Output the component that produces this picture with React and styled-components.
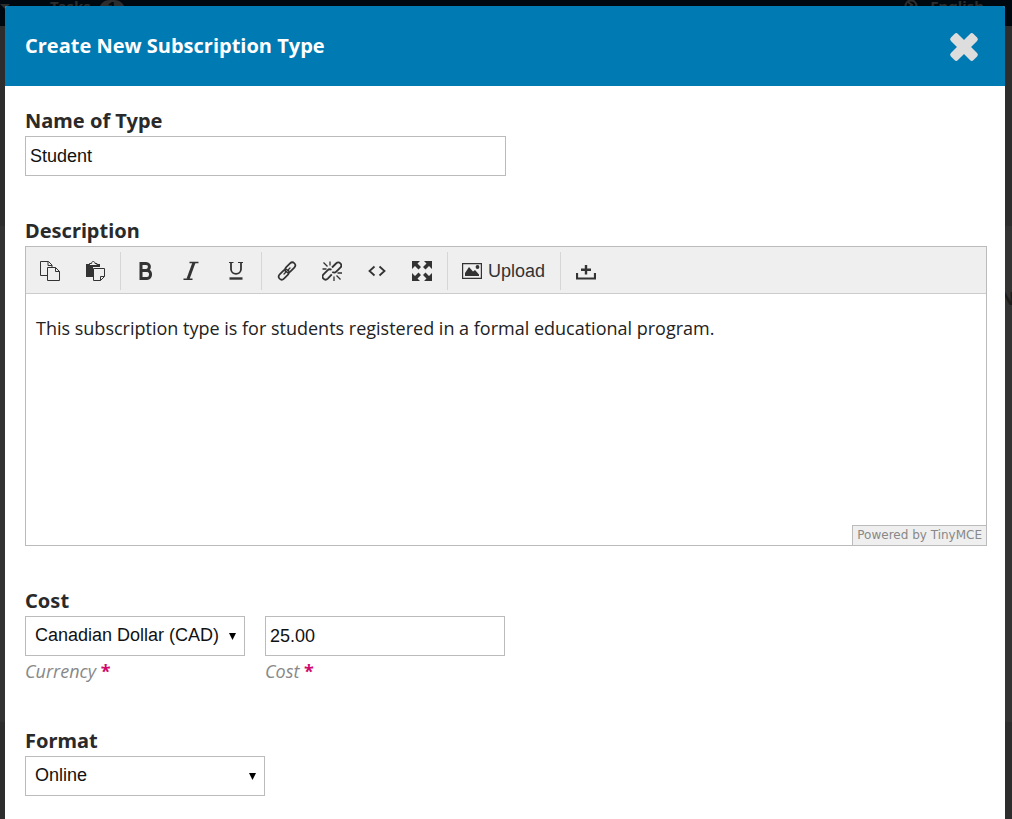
import React from "react";
import styled, { createGlobalStyle } from "styled-components";

const GlobalStyle = createGlobalStyle`
  *, *::before, *::after { box-sizing: border-box; }
  body {
    margin: 0;
    background: #2d2d2d;
    font-family: "Noto Sans", "Open Sans", sans-serif;
    font-size: 18px;
    line-height: 30px;
    color: #2a2a2a;
  }
  #root { position: relative; }
`;

const Backdrop = styled.div`
  position: absolute;
  inset: 0;
  height: 100vh;
  overflow: hidden;
  display: flex;
  flex-direction: column;
  background: #2d2d2d;
`;

const TopBar = styled.header`
  display: flex;
  align-items: flex-start;
  height: 26px;
  padding: 0 28px 0 0;
  background: #00080f;
  color: #2d2d2d;
  font-size: 15px;
  font-weight: 700;
  line-height: 12px;
`;

const Caret = styled.span`
  margin: 4px 40px 0 0;
  border: 5px solid transparent;
  border-top-color: #2d2d2d;
  border-bottom-width: 0;
`;

const TaskCount = styled.span`
  width: 26px;
  height: 20px;
  margin-left: 8px;
  border-radius: 10px;
  background: #2d2d2d;
  color: #00080f;
  text-align: center;
`;

const Language = styled.span`
  display: flex;
  gap: 12px;
  margin-left: auto;
`;

const BackdropPanel = styled.div`
  height: 496px;
  margin-top: 200px;
  padding: 57px 0 0 calc(100% - 12px);
  background: #333333;
  color: #1d1d1d;
  font-weight: 700;
  white-space: nowrap;
`;

const Modal = styled.section`
  position: relative;
  min-height: calc(100vh - 6px);
  margin: 0 7px 0 5px;
  border-radius: 2px 2px 0 0;
  background: #ffffff;
`;

const Page = styled.div`
  padding-top: 6px;
`;

const ModalHeader = styled.header`
  display: flex;
  align-items: center;
  justify-content: space-between;
  height: 80px;
  padding: 0 26px 0 20px;
  border-radius: 2px 2px 0 0;
  background: #007ab2;
`;

const Title = styled.h1`
  margin: 0;
  color: #ffffff;
  font-family: "Open Sans", sans-serif;
  font-size: 20px;
  font-weight: 700;
  line-height: 30px;
`;

const CloseButton = styled.button`
  display: flex;
  padding: 2px 0 0;
  border: 0;
  background: none;
  color: #dddddd;
  cursor: pointer;
`;

const Form = styled.form`
  display: flex;
  flex-direction: column;
  gap: 40px;
  padding: 20px 18px 23px 20px;
`;

const Field = styled.div`
  display: flex;
  flex-direction: column;
  align-items: flex-start;
`;

const Label = styled.label`
  font-size: 20px;
  font-weight: 700;
  line-height: 30px;
`;

const Input = styled.input`
  width: ${(p) => p.$width};
  height: 40px;
  padding: 0 4px;
  border: 1px solid #bbbbbb;
  border-radius: 0;
  background: #ffffff;
  color: #111111;
  font: 18px/38px "Liberation Sans", Arial, sans-serif;
`;

const SelectWrap = styled.span`
  display: grid;
  grid-template-columns: 1fr 16px;
  align-items: center;
  width: ${(p) => p.$width};
  height: 40px;

  svg {
    grid-area: 1 / 2;
    pointer-events: none;
  }
`;

const Select = styled.select`
  grid-area: 1 / 1 / 2 / 3;
  width: 100%;
  height: 40px;
  padding: 0 20px 2px 9px;
  appearance: none;
  border: 1px solid #bbbbbb;
  border-radius: 0;
  background: #ffffff;
  color: #111111;
  font: 18px "Liberation Sans", Arial, sans-serif;
`;

const Row = styled.div`
  display: flex;
  gap: 20px;
`;

const Hint = styled.label`
  color: #888888;
  font-family: "Open Sans", sans-serif;
  font-size: 18px;
  font-style: italic;
  line-height: 30px;
`;

const Required = styled.span`
  color: #d00a6c;
  font-style: normal;
  font-weight: 700;
`;

const Editor = styled.div`
  display: flex;
  flex-direction: column;
  width: 100%;
  height: 300px;
  border: 1px solid #bbbbbb;
`;

const Toolbar = styled.div`
  display: flex;
  align-items: center;
  height: 47px;
  padding-top: 2px;
  border-bottom: 1px solid #cccccc;
  background: #efefef;
`;

const ToolGroup = styled.div`
  display: flex;
  align-items: center;
  height: 38px;
  padding: 0 3px 0 2px;

  &:first-child { padding-left: 1px; }
  & + & { border-left: 1px solid #d6d6d6; }
`;

const ToolButton = styled.button`
  display: flex;
  align-items: center;
  justify-content: center;
  gap: 6px;
  min-width: 45px;
  height: 36px;
  padding: 0 12px;
  border: 0;
  background: none;
  color: #333333;
  font: 18px "Liberation Sans", Arial, sans-serif;
`;

const EditorText = styled.textarea`
  flex: 1;
  width: 100%;
  padding: 19px 10px 0;
  border: 0;
  resize: none;
  outline: 0;
  background: #ffffff;
  color: #222222;
  font: 18px/30px "Open Sans", sans-serif;
`;

const EditorFooter = styled.div`
  display: flex;
  justify-content: flex-end;
`;

const Powered = styled.a`
  height: 20px;
  padding: 0 4px;
  border: solid #bbbbbb;
  border-width: 1px 0 0 1px;
  background: #efefef;
  color: #888888;
  font: 12px/18px "DejaVu Sans", sans-serif;
  text-decoration: none;
`;

const Glyph = ({ children, size = 20 }) => (
  <svg width={size} height={size} viewBox={`0 0 ${size} ${size}`} fill="none" stroke="currentColor" aria-hidden="true">
    {children}
  </svg>
);

const CopyIcon = () => (
  <Glyph>
    <path d="M7.500 14.500H.5V.5h8l3.500 3.500v2.500M8 .5v4h4M7.500 6.500h8l4 4v9h-12zM15.500 6.500v4h4" />
  </Glyph>
);

const PasteIcon = () => (
  <Glyph>
    <path d="M1 3h14v3H8v10H1z" fill="currentColor" stroke="none" />
    <path d="M4.500 4.500v-2h2c0-2.700 3.500-2.700 3.500 0h2v2z" fill="#efefef" />
    <path d="M8.500 7.500h11v8l-4 4h-7zM15.500 19.500v-4h4" fill="#efefef" />
  </Glyph>
);

const BoldIcon = () => (
  <Glyph>
    <path d="M5 2.500h5c5 0 4 7 0 7H5zM5 9.500h6c5 0 4.500 8 0 8H5z" strokeWidth="3" />
  </Glyph>
);

const ItalicIcon = () => (
  <Glyph>
    <path d="M8.500 1.500h9M2.500 18.200h9" strokeWidth="1.400" />
    <path d="M13 1.500L7 18" strokeWidth="3" />
  </Glyph>
);

const UnderlineIcon = () => (
  <Glyph>
    <path d="M3 1.500h4.500M12 1.500h5" strokeWidth="1.200" />
    <path d="M5 1.500V8c0 6.500 10 6.500 10 0V1.500" strokeWidth="1.800" />
    <path d="M3.500 17.500h13" strokeWidth="2.400" />
  </Glyph>
);

const LinkIcon = () => (
  <Glyph>
    <g strokeWidth="1.700" strokeLinecap="round">
      <path d="M9 11c-1.500-1.500-1-3.600 0-4.600l4-4c3-3 7.200 1.200 4.300 4.200l-4 4c-.8.800-1.800 1.200-2.600 1.100" />
      <path d="M11 9c1.500 1.500 1 3.600 0 4.600l-4 4c-3 3-7.200-1.200-4.300-4.200l4-4c.8-.8 1.800-1.200 2.600-1.100" />
      <path d="M7 13l6-6" strokeWidth="1.300" />
    </g>
  </Glyph>
);

const UnlinkIcon = () => (
  <Glyph>
    <g strokeWidth="1.800">
      <path d="M10 6.500l4-4c3-3 7.200 1.200 4.300 4.200l-4 4c-1 1-2.700 1.200-4 .4" />
      <path d="M9.500 8.700c-1.300-.6-3-.4-4 .6l-4 4c-3 3 1.300 7.200 4.300 4.300l4-4.200" />
      <path d="M1.500 1.500L5.500 5.500M8 .5V4.500M.500 8H4.500M12 15.500v4.500M15.500 12h4.500M14.500 14.500l4 4" strokeWidth="1.300" />
    </g>
  </Glyph>
);

const CodeIcon = () => (
  <Glyph>
    <path d="M7.500 5.500L2.500 10l5 4.500M12.500 5.500l5 4.500-5 4.500" strokeWidth="1.800" />
  </Glyph>
);

const FullscreenIcon = () => (
  <Glyph>
    <path
      d="M0 0h8L5.500 2.500 9 6 6.500 8.500 3 5 0 8zM20 0v8l-3-3-3.500 3.500L11 6l3.500-3.500L12 0zM0 20v-8l3 3 3.500-3.500L9 14l-3.500 3.500L8 20zM20 20h-8l2.500-2.500L11 14l2.500-2.500L17 15l3-3z"
      fill="currentColor"
      stroke="none"
    />
  </Glyph>
);

const ImageIcon = () => (
  <Glyph>
    <path d="M.6 2.600h18.800v14.800H.6z" strokeWidth="1.200" />
    <path d="M3 15V12l4-6 4 4.500 2-1.500 4 4.500V15z" fill="currentColor" stroke="none" />
    <circle cx="15.500" cy="6" r="1.900" fill="currentColor" stroke="none" />
  </Glyph>
);

const UploadIcon = () => (
  <Glyph>
    <path d="M10 4v9.500M5 8.700h10" strokeWidth="2.400" />
    <path d="M1 12v5.500h18V12" strokeWidth="2.200" />
  </Glyph>
);

const CloseIcon = () => (
  <Glyph size={30}>
    <g fill="currentColor" stroke="none" transform="rotate(45 15 15)">
      <rect x="-1" y="10" width="32" height="10" rx="2.500" />
      <rect x="10" y="-1" width="10" height="32" rx="2.500" />
    </g>
  </Glyph>
);

const ArrowIcon = () => (
  <svg width="7" height="8" viewBox="0 0 7 8" aria-hidden="true">
    <path d="M0 1h7L3.500 8z" fill="#000000" />
  </svg>
);

const GlobeIcon = () => (
  <svg width="14" height="13" viewBox="0 0 14 13" fill="none" stroke="currentColor" strokeWidth="2" aria-hidden="true">
    <circle cx="7" cy="6" r="5.500" />
    <path d="M4 2l4 3-4 3M9 9l3-3" />
  </svg>
);

const TOOL_GROUPS = [
  [["Copy", CopyIcon], ["Paste", PasteIcon]],
  [["Bold", BoldIcon], ["Italic", ItalicIcon], ["Underline", UnderlineIcon]],
  [["Insert link", LinkIcon], ["Remove link", UnlinkIcon], ["Source code", CodeIcon], ["Fullscreen", FullscreenIcon]],
  [["Upload", ImageIcon, true]],
  [["Insert file", UploadIcon]],
];

export default function App() {
  return (
    <>
      <GlobalStyle />
      <Backdrop aria-hidden="true">
        <TopBar>
          <Caret />
          <span>Tasks</span>
          <TaskCount>1</TaskCount>
          <Language>
            <GlobeIcon />
            <span>English</span>
          </Language>
        </TopBar>
        <BackdropPanel>Ne</BackdropPanel>
      </Backdrop>
      <Page>
        <Modal role="dialog" aria-labelledby="modal-title">
          <ModalHeader>
            <Title id="modal-title">Create New Subscription Type</Title>
            <CloseButton type="button" aria-label="Close">
              <CloseIcon />
            </CloseButton>
          </ModalHeader>
          <Form>
            <Field>
              <Label htmlFor="type-name">Name of Type</Label>
              <Input id="type-name" $width="50%" defaultValue="Student" />
            </Field>
            <Field>
              <Label htmlFor="description">Description</Label>
              <Editor>
                <Toolbar role="toolbar">
                  {TOOL_GROUPS.map((group, i) => (
                    <ToolGroup key={i}>
                      {group.map(([name, Icon, showName]) => (
                        <ToolButton key={name} type="button" aria-label={name}>
                          <Icon />
                          {showName && name}
                        </ToolButton>
                      ))}
                    </ToolGroup>
                  ))}
                </Toolbar>
                <EditorText
                  id="description"
                  defaultValue="This subscription type is for students registered in a formal educational program."
                />
                <EditorFooter>
                  <Powered href="#tinymce">Powered by TinyMCE</Powered>
                </EditorFooter>
              </Editor>
            </Field>
            <Field>
              <Label htmlFor="currency">Cost</Label>
              <Row>
                <Field>
                  <SelectWrap $width="220px">
                    <Select id="currency" defaultValue="CAD">
                      <option value="CAD">Canadian Dollar (CAD)</option>
                    </Select>
                    <ArrowIcon />
                  </SelectWrap>
                  <Hint htmlFor="currency">
                    Currency <Required>*</Required>
                  </Hint>
                </Field>
                <Field>
                  <Input id="cost" $width="240px" defaultValue="25.00" />
                  <Hint htmlFor="cost">
                    Cost <Required>*</Required>
                  </Hint>
                </Field>
              </Row>
            </Field>
            <Field>
              <Label htmlFor="format">Format</Label>
              <SelectWrap $width="240px">
                <Select id="format" defaultValue="online">
                  <option value="online">Online</option>
                </Select>
                <ArrowIcon />
              </SelectWrap>
            </Field>
          </Form>
        </Modal>
      </Page>
    </>
  );
}
